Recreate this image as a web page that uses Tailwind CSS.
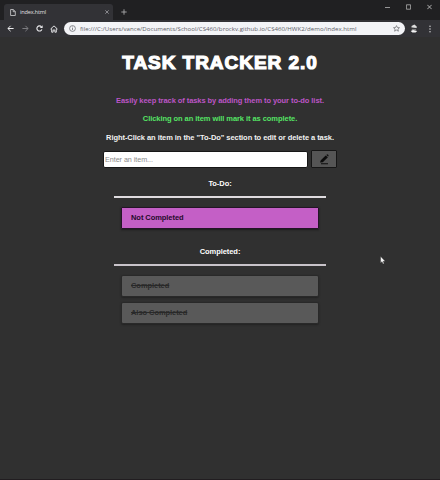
<!DOCTYPE html>
<html lang="en">
<head>
<meta charset="utf-8">
<title>index.html</title>
<script src="https://cdn.jsdelivr.net/npm/@tailwindcss/browser@4"></script>
</head>
<body class="relative flex h-[480px] w-[440px] flex-col overflow-hidden bg-[#303030] font-['Liberation_Sans',Arial,sans-serif] text-white">
<header class="shrink-0">
  <div class="flex h-[20px] items-end bg-[#202022]">
    <div class="ml-[4px] flex h-[16px] w-[109px] items-center rounded-t-[3px] bg-[#323236] pl-[6px] pr-[4px]">
      <svg class="h-[7px] w-[6px]" viewBox="0 0 6 7" fill="none" stroke="#d2d2d4" stroke-width=".8"><path d="M.6.5h2.7l2 2v4H.6zM3.2.6v2.1h2"/></svg>
      <span class="ml-[4px] flex-1 font-['Open_Sans',sans-serif] text-[5.6px] leading-[8px] tracking-[-.18px] text-[#e0e0e2]">index.html</span>
      <svg class="h-[4px] w-[4px]" viewBox="0 0 4 4" stroke="#a0a0a4" stroke-width=".8"><path d="M.3.3l3.4 3.4M3.7.3L.3 3.7"/></svg>
    </div>
    <svg class="mb-[5px] ml-[8px] h-[6px] w-[6px]" viewBox="0 0 6 6" stroke="#a9a9ab" stroke-width=".9"><path d="M3 .3v5.4M.3 3h5.4"/></svg>
    <div class="ml-auto mr-[8px] flex items-center gap-[16px] self-start pt-[4px]">
      <svg class="h-[6px] w-[5px]" viewBox="0 0 5 6" stroke="#b5b5b5" stroke-width=".8"><path d="M0 3.5h5"/></svg>
      <svg class="h-[6px] w-[5px]" viewBox="0 0 5 6" fill="none" stroke="#b5b5b5" stroke-width=".8"><path d="M.4.8h4.2v4.4H.4z"/></svg>
      <svg class="h-[6px] w-[5px]" viewBox="0 0 5 6" stroke="#cfcfcf" stroke-width=".8"><path d="M.3.8l4.4 4.4M4.7.8L.3 5.2"/></svg>
    </div>
  </div>
  <div class="flex h-[17px] items-center bg-[#323236] pl-[7px]">
    <svg class="h-[7px] w-[7px]" viewBox="0 0 7 7" fill="none" stroke="#ececee" stroke-width="1"><path d="M6.6 3.5H1M3.6.8L.9 3.5l2.7 2.7"/></svg>
    <svg class="ml-[8px] h-[7px] w-[7px]" viewBox="0 0 7 7" fill="none" stroke="#7c7c80" stroke-width="1"><path d="M.4 3.5H6M3.4.8l2.7 2.7-2.7 2.7"/></svg>
    <svg class="ml-[7px] h-[7px] w-[7px]" viewBox="0 0 7 7" fill="none" stroke="#ececee" stroke-width="1.1"><path d="M5.9 4.4A2.6 2.6 0 1 1 5.4 1.7"/><path d="M6.6.2v2.9H3.8z" fill="#ececee" stroke="none"/></svg>
    <svg class="ml-[7px] h-[8px] w-[8px]" viewBox="0 0 8 8" fill="none" stroke="#dedee0" stroke-width="1"><path d="M.5 4.1L4 .9l3.5 3.2M1.7 3.4v3.8h1.4V5h1.8v2.2h1.4V3.4"/></svg>
    <div class="ml-[6px] flex h-[13px] w-[341px] items-center rounded-full bg-[#f3f4f7] pl-[5px] pr-[5px]">
      <svg class="h-[7px] w-[7px]" viewBox="0 0 7 7" fill="none" stroke="#6f7075" stroke-width=".8"><circle cx="3.5" cy="3.5" r="2.9"/><path d="M3.5 3v2M3.5 1.6v.8"/></svg>
      <span class="ml-[4px] flex-1 whitespace-nowrap font-['Open_Sans',sans-serif] text-[6.1px] leading-[9px] tracking-[.03px] text-[#606168]">file:///C:/Users/vance/Documents/School/CS460/brockv.github.io/CS460/HWK2/demo/index.html</span>
      <svg class="h-[7px] w-[7px]" viewBox="0 0 7 7" fill="none" stroke="#66676c" stroke-width=".7"><path d="M3.5.6l.9 1.9 2.1.2-1.6 1.4.5 2.1-1.9-1.1-1.9 1.1.5-2.1L.5 2.7l2.1-.2z"/></svg>
    </div>
    <svg class="ml-[5px] h-[9px] w-[8px]" viewBox="0 0 8 9"><path d="M1.4 3.6L1.6 2 4.4.5l2 1.8.4 1.8z" fill="#dedede"/><path d="M.8 3.7l6.4.5-.5 1.6-2-.6-3 .3z" fill="#3a3a3c"/><path d="M1.7 5.2h4.4L5.6 6.3H2.2z" fill="#999"/><path d="M.7 7.1L3 6l4.2.9-1.6 1.6H2.4z" fill="#f4f4f4"/></svg>
    <svg class="ml-[11px] h-[8px] w-[2px]" viewBox="0 0 2 8" fill="#c5c5c7"><circle cx="1" cy="1.3" r=".8"/><circle cx="1" cy="4" r=".8"/><circle cx="1" cy="6.7" r=".8"/></svg>
  </div>
</header>
<main class="flex flex-1 flex-col items-center border-b border-[#211d20] font-bold">
  <h1 class="mt-[14px] h-[24px] whitespace-nowrap text-[19px] leading-[24px] tracking-[.96px] [-webkit-text-stroke:1.2px_white]">TASK TRACKER 2.0</h1>
  <p class="mt-[21px] h-[10px] whitespace-nowrap text-[7.5px] leading-[10px] tracking-[-.07px] text-[#bd55c6]">Easily keep track of tasks by adding them to your to-do list.</p>
  <p class="mt-[8px] h-[10px] whitespace-nowrap text-[7.5px] leading-[10px] tracking-[-.06px] text-[#55e465]">Clicking on an item will mark it as complete.</p>
  <p class="mt-[9px] h-[10px] whitespace-nowrap text-[7.5px] leading-[10px] tracking-[-.06px] text-[#f2f2f2]">Right-Click an item in the "To-Do" section to edit or delete a task.</p>
  <form class="mt-[7px] flex h-[18px] items-center gap-[3px]">
    <input class="h-[17px] w-[205px] rounded-[2px] border border-[#171717] bg-white px-[1px] text-[7.2px] font-normal tracking-[-.05px] text-[#333] placeholder:text-[#8a8a8a]" placeholder="Enter an item...">
    <button type="button" class="flex h-[18px] w-[26px] items-center justify-center rounded-[1px] border border-[#161616] bg-[#555]">
      <svg class="h-[11px] w-[11px]" viewBox="0 0 11 11" fill="#0c0c0c"><path d="M1 8.4l.8-2.1L6.7 1.4 8.9 3.3 3.8 8.2zM7.3.9l.6-.5c.5-.4 2 .9 1.6 1.5l-.4.7zM2 9.2h7v1H2z"/></svg>
    </button>
  </form>
  <h2 class="mt-[11px] h-[10px] text-[7.5px] leading-[10px] tracking-[-.06px]">To-Do:</h2>
  <hr class="mt-[7px] h-[2px] w-[212px] border-0 bg-[#dedbdf]">
  <ul class="mt-[9px] w-[198px]">
    <li class="flex h-[22px] items-center rounded-[1px] border border-[#241427] bg-[#c45fc6] pl-[9px] text-[7.5px] leading-[10px] tracking-[-.06px] text-[#260b2b] shadow-[0_1px_2px_#1c1c1c]">Not Completed</li>
  </ul>
  <h2 class="mt-[18px] h-[10px] text-[7.5px] leading-[10px] tracking-[-.06px]">Completed:</h2>
  <hr class="mt-[7px] h-[2px] w-[212px] border-0 bg-[#c8c3c9]">
  <ul class="mt-[9px] flex w-[198px] flex-col gap-[5px] text-[7.5px] leading-[10px] tracking-[-.06px] text-[#292929] line-through">
    <li class="flex h-[22px] items-center rounded-[2px] border border-[#292929] bg-[#595959] pl-[9px] shadow-[0_1px_2px_#222]">Completed</li>
    <li class="flex h-[22px] items-center rounded-[2px] border border-[#292929] bg-[#595959] pl-[9px] shadow-[0_1px_2px_#222]">Also Completed</li>
  </ul>
</main>
<svg class="absolute left-[380px] top-[256px] h-[9px] w-[6px]" viewBox="0 0 6 9" fill="#f3f3f3" stroke="#202020" stroke-width=".4"><path d="M.5.3v6.8L2 5.7l1 2.4 1.2-.5-1-2.3h2.1z"/></svg>
</body>
</html>
